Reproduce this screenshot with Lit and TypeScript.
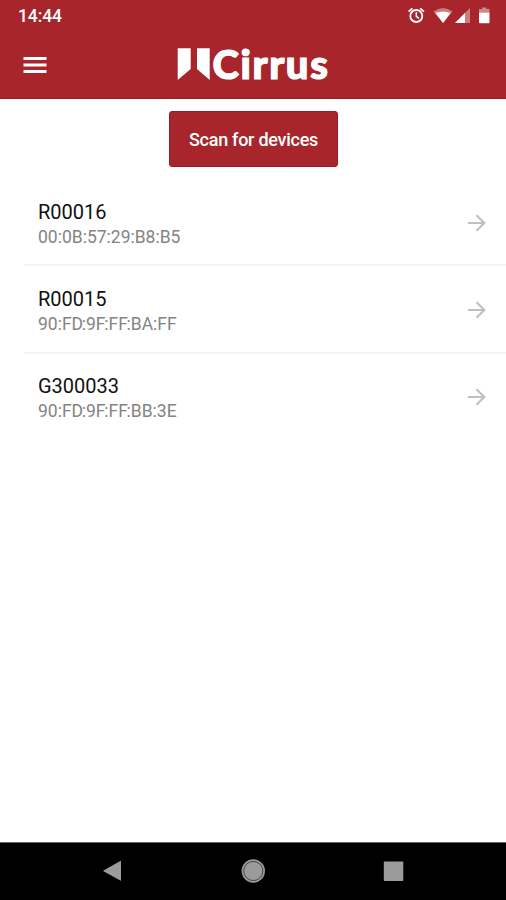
import { LitElement, html, css } from "lit";
import { customElement, property } from "lit/decorators.js";

@customElement("status-bar")
class StatusBar extends LitElement {
  static styles = css`
    :host { display: flex; height: 32px; justify-content: space-between; padding: 0 13px 0 18px; color: #fff; }
    .time { font-size: 17.5px; font-weight: 500; line-height: 33px; letter-spacing: -0.1px; }
    .icons { display: block; }
  `;
  render() {
    return html`
      <span class="time">14:44</span>
      <svg class="icons" width="87" height="32" viewBox="406 0 87 32" fill="#fff">
        <g fill="none" stroke="#fff" stroke-width="1.8">
          <circle cx="416.3" cy="16" r="6" />
          <path d="M416.3 12.2V16.4L419 18.4" stroke-width="1.5" />
          <path d="M408.6 11.6L412.4 8.4M424 11.6L420.2 8.4" />
        </g>
        <path d="M433.5 11.5Q443 4.5 452.5 11.5L443 23Z" opacity=".4" />
        <path d="M435.5 13Q443 10 450.5 13L443 23Z" />
        <path d="M470 8V23H455Z" opacity=".4" />
        <path d="M465 13V23H455Z" />
        <path d="M479 9H482V7.5H486.5V9H489.5V12.5H479Z" opacity=".45" />
        <path d="M479 12.5H489.5V22.5Q489.5 23.3 488.7 23.3H479.8Q479 23.3 479 22.5Z" />
      </svg>
    `;
  }
}

@customElement("app-header")
class AppHeader extends LitElement {
  static styles = css`
    :host { display: grid; grid-template-columns: 1fr auto 1fr; height: 66px; align-items: start; }
    .menu { display: block; margin: 24px 0 0 23px; }
    .brand { display: flex; height: 66px; align-items: flex-start; gap: 3px; color: #fff; }
    .flags { display: block; margin-top: 15px; }
    .name { font: 900 40px/65px Lato, sans-serif; letter-spacing: 1.6px; -webkit-text-stroke: 1.2px #fff; }
  `;
  render() {
    return html`
      <svg class="menu" width="24" height="18" viewBox="0 0 24 18" fill="#fff">
        <path d="M.5 1H23.5V4H.5ZM.5 7.5H23.5V10.5H.5ZM.5 14H23.5V17H.5Z" />
      </svg>
      <div class="brand">
        <svg class="flags" width="33" height="34" viewBox="0 0 33 34" fill="#fff">
          <path d="M.7 1.3H13.7V22L.7 33ZM20 1.3H32.7V33L20 22Z" />
        </svg>
        <span class="name">Cirrus</span>
      </div>
    `;
  }
}

@customElement("device-row")
class DeviceRow extends LitElement {
  @property() declare name: string;
  @property() declare address: string;
  static styles = css`
    :host { display: flex; box-sizing: border-box; height: 87.3px; margin-left: 24px; padding: 0 20px 0 14px; align-items: center; justify-content: space-between; }
    .text { display: flex; flex-direction: column; padding-top: 4px; }
    .name { font-size: 20px; line-height: 26px; color: #111; letter-spacing: 0; }
    .address { font-size: 17.5px; line-height: 24px; color: #848484; }
    .tight { letter-spacing: -1.3px; }
    .arrow { display: block; margin-top: 2px; }
  `;
  render() {
    const parts = this.address.split(/([FD](?=:))/);
    return html`
      <div class="text">
        <span class="name">${this.name}</span>
        <span class="address">${parts.map((p, i) => (i % 2 ? html`<span class="tight">${p}</span>` : p))}</span>
      </div>
      <svg class="arrow" width="18" height="18" viewBox="0 0 18 18" fill="none" stroke="#c0c0c0" stroke-width="2.2">
        <path d="M0 9H16M8.5 1.2L16.3 9L8.5 16.8" />
      </svg>
    `;
  }
}

@customElement("nav-bar")
class NavBar extends LitElement {
  static styles = css`
    :host { display: flex; box-sizing: border-box; height: 58px; padding: 0 101px 2px; align-items: center; justify-content: space-between; background: #000; border-top: 1px solid #666; }
    .key { display: block; }
  `;
  render() {
    return html`
      <svg class="key" width="24" height="24" viewBox="0 0 24 24" fill="#9b9b9b">
        <path d="M20 2.2V21.4Q20 22 19.3 21.6L2.5 12.3Q2 12 2.5 11.6L19.3 1.9Q20 1.6 20 2.2Z" />
      </svg>
      <svg class="key" width="24" height="24" viewBox="0 0 24 24" fill="#9b9b9b">
        <circle cx="12.3" cy="12" r="11.7" />
        <circle cx="12.3" cy="12" r="9.6" fill="none" stroke="#444" stroke-width="1" />
      </svg>
      <svg class="key" width="24" height="24" viewBox="0 0 24 24" fill="#9b9b9b">
        <rect x="2.8" y="2.5" width="19.5" height="19.5" rx="1" />
      </svg>
    `;
  }
}

@customElement("app-root")
class AppRoot extends LitElement {
  private devices = [
    { name: "R00016", address: "00:0B:57:29:B8:B5" },
    { name: "R00015", address: "90:FD:9F:FF:BA:FF" },
    { name: "G300033", address: "90:FD:9F:FF:BB:3E" },
  ];
  static styles = css`
    :host { display: flex; flex-direction: column; height: 900px; background: #fff; font-family: Roboto, sans-serif; }
    .top { box-sizing: border-box; height: 99px; background: #a8252b; border-bottom: 1px solid #981b20; }
    .content { flex: 1; display: flex; flex-direction: column; }
    .scan { align-self: center; margin: 12px 0 11px 1px; width: 169px; height: 56px; padding: 2px 0 0; border: 1px solid #991b21; border-radius: 3px; background: #a8252b; color: #fff; font: 500 18px/52px Roboto, sans-serif; letter-spacing: -0.27px; }
    .line { height: 2px; margin: -1px 0 -1px 24px; background: #f5f5f5; }
  `;
  render() {
    return html`
      <header class="top">
        <status-bar></status-bar>
        <app-header></app-header>
      </header>
      <main class="content">
        <button class="scan">Scan for devices</button>
        ${this.devices.map(
          (d, i) => html`
            ${i ? html`<div class="line"></div>` : ""}
            <device-row .name=${d.name} .address=${d.address}></device-row>
          `
        )}
      </main>
      <nav-bar></nav-bar>
    `;
  }
}
